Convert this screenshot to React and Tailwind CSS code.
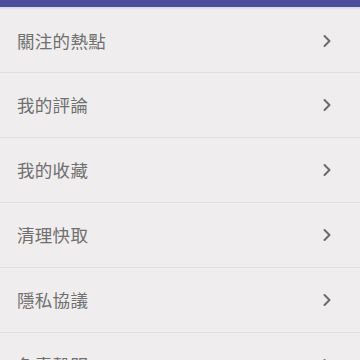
import { ChevronRight } from 'lucide-react';

const items = ['關注的熱點', '我的評論', '我的收藏', '清理快取', '隱私協議', '免責聲明'];

const App = () => {
  return (
    <div
      className="w-[360px] h-[360px] overflow-hidden bg-[#efeded]"
      style={{ fontFamily: '"Noto Sans CJK TC", "Noto Sans", sans-serif' }}
    >
      <div className="h-[7px] bg-[#4b4f9b]" />
      <div className="h-[3px] bg-gradient-to-b from-[#d4d4ec] to-[#efeded]" />
      <ul>
        {items.map((label, i) => (
          <li
            key={label}
            className={`flex items-center justify-between pl-[17px] pr-[23px] border-b border-[#e0dede] ${
              i === 0 ? 'h-[63px]' : 'h-[65px]'
            }`}
          >
            <span className="text-[17.5px] text-[#707070] tracking-[0.3px]">{label}</span>
            <ChevronRight className="w-[20px] h-[20px] text-[#6a6a6a]" strokeWidth={2.4} />
          </li>
        ))}
      </ul>
    </div>
  );
};

export default App;
